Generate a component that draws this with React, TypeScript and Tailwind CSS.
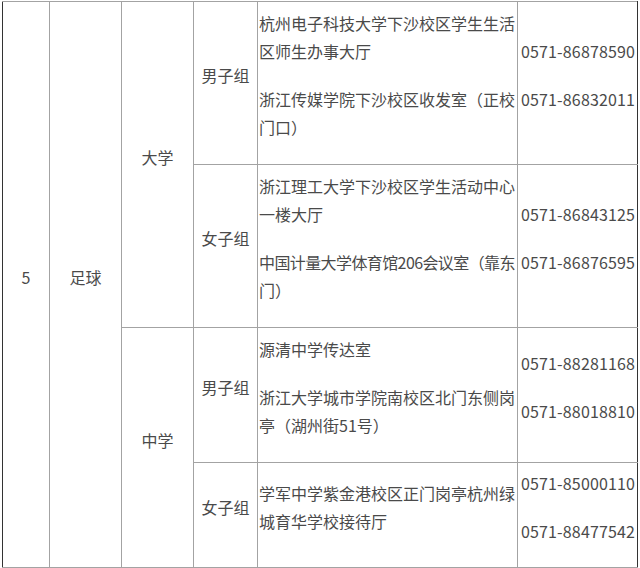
const FONT = { fontFamily: '"Noto Sans CJK SC", "Noto Sans", sans-serif' };

type Group = {
  label: string;
  height: number;
  addresses: string[][];
  phones: string[];
};

// lines that are a little wider than the column in our font
const TIGHT = new Set(['中国计量大学体育馆206会议室（靠东']);

const university: Group[] = [
  {
    label: '男子组',
    height: 163,
    addresses: [
      ['杭州电子科技大学下沙校区学生生活', '区师生办事大厅'],
      ['浙江传媒学院下沙校区收发室（正校', '门口）'],
    ],
    phones: ['0571-86878590', '0571-86832011'],
  },
  {
    label: '女子组',
    height: 163,
    addresses: [
      ['浙江理工大学下沙校区学生活动中心', '一楼大厅'],
      ['中国计量大学体育馆206会议室（靠东', '门）'],
    ],
    phones: ['0571-86843125', '0571-86876595'],
  },
];

const middle: Group[] = [
  {
    label: '男子组',
    height: 135,
    addresses: [['源清中学传达室'], ['浙江大学城市学院南校区北门东侧岗', '亭（湖州街51号）']],
    phones: ['0571-88281168', '0571-88018810'],
  },
  {
    label: '女子组',
    height: 105,
    addresses: [['学军中学紫金港校区正门岗亭杭州绿', '城育华学校接待厅']],
    phones: ['0571-85000110', '0571-88477542'],
  },
];

const cell = 'border border-[#a3a3a3] align-middle p-0 pb-4';

function GroupCells({ g }: { g: Group }) {
  return (
    <>
      <td className={`${cell} text-center`}>{g.label}</td>
      <td className={`${cell} pl-px`}>
        <div className="flex flex-col gap-5">
          {g.addresses.map((p, i) => (
            <div key={i}>
              {p.map((line, j) => (
                <div key={j} className={`whitespace-nowrap ${TIGHT.has(line) ? 'tracking-[-0.6px]' : ''}`}>
                  {line}
                </div>
              ))}
            </div>
          ))}
        </div>
      </td>
      <td className={`${cell} pl-[3px] border-r-[#333]`}>
        <div className="flex flex-col gap-5">
          {g.phones.map((ph) => (
            <div key={ph} className="whitespace-nowrap tracking-[0.15px]">{ph}</div>
          ))}
        </div>
      </td>
    </>
  );
}

export default function App() {
  return (
    <div className="w-[640px] h-[568px] bg-white overflow-hidden" style={FONT}>
      <table className="table-fixed border-collapse ml-[2px] mt-px w-[636px] text-[16px] leading-[28px] text-[#4a4a4a]">
        <colgroup>
          <col className="w-[47px]" />
          <col className="w-[72px]" />
          <col className="w-[72px]" />
          <col className="w-[64px]" />
          <col className="w-[260px]" />
          <col className="w-[120px]" />
        </colgroup>
        <tbody>
          <tr style={{ height: university[0].height }}>
            <td rowSpan={4} className={`${cell} text-center border-l-[#333]`}>5</td>
            <td rowSpan={4} className={`${cell} text-center`}>足球</td>
            <td rowSpan={2} className={`${cell} text-center`}>大学</td>
            <GroupCells g={university[0]} />
          </tr>
          <tr style={{ height: university[1].height }}>
            <GroupCells g={university[1]} />
          </tr>
          <tr style={{ height: middle[0].height }}>
            <td rowSpan={2} className={`${cell} text-center`}>中学</td>
            <GroupCells g={middle[0]} />
          </tr>
          <tr style={{ height: middle[1].height }}>
            <GroupCells g={middle[1]} />
          </tr>
        </tbody>
      </table>
    </div>
  );
}
